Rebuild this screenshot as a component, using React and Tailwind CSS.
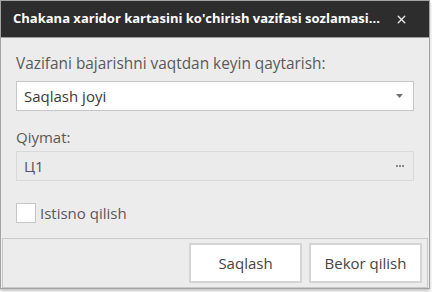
import React from 'react';
import { X } from 'lucide-react';

const font = { fontFamily: '"Open Sans", "Noto Sans", sans-serif' };

const Dots = () => (
  <span className="flex gap-[1px] items-center">
    <span className="w-[2px] h-[2px] bg-[#8a8a8a]" />
    <span className="w-[2px] h-[2px] bg-[#8a8a8a]" />
    <span className="w-[2px] h-[2px] bg-[#8a8a8a]" />
  </span>
);

const App = () => {
  return (
    <div className="w-[432px] h-[292px] bg-white" style={font}>
      <div className="w-[430px] h-[289px] flex flex-col bg-[#ececec] border border-[#a3a3a3] shadow-[0_2px_3px_rgba(0,0,0,0.25)]">
        <div className="h-[37px] shrink-0 bg-[#2d2d2d] border-b border-[#9c9c9c] flex items-center justify-between pl-[12px] pr-[21px]">
          <span className="text-white font-bold text-[13px] whitespace-nowrap">
            Chakana xaridor kartasini ko'chirish vazifasi sozlamasi...
          </span>
          <X size={13} strokeWidth={2.6} className="text-[#e6e6e6] shrink-0" />
        </div>

        <div className="flex-1 px-[15px] pt-[16px]">
          <div className="text-[15.4px] leading-[20px] text-[#595959]">
            Vazifani bajarishni vaqtdan keyin qaytarish:
          </div>
          <div className="mt-[7px] h-[30px] bg-white border border-[#c6c6c6] flex items-center justify-between pl-[7px] pr-[10px]">
            <span className="text-[15px] text-[#3a3a3a]">Saqlash joyi</span>
            <svg width="7" height="4" viewBox="0 0 7 4">
              <path d="M0 0 L7 0 L3.5 4 Z" fill="#707070" />
            </svg>
          </div>

          <div className="mt-[16px] text-[15px] leading-[20px] text-[#595959]">Qiymat:</div>
          <div className="mt-[4px] h-[30px] bg-[#ebebeb] border border-[#dadada] flex items-center justify-between pl-[7px] pr-[9px]">
            <span className="text-[15px] text-[#555]">Ц1</span>
            <Dots />
          </div>

          <label className="mt-[21px] flex items-center gap-[4px]">
            <span className="w-[20px] h-[20px] bg-white border border-[#c6c6c6]" />
            <span className="text-[15px] text-[#595959]">Istisno qilish</span>
          </label>
        </div>

        <div className="h-[50px] shrink-0 mx-[1px] border border-[#c9c9c9] flex items-center justify-end gap-[7px] pr-[5px]">
          <button className="w-[113px] h-[40px] bg-white border-2 border-[#d4d4d4] text-[15px] text-[#444]">
            Saqlash
          </button>
          <button className="w-[113px] h-[40px] bg-white border-2 border-[#d4d4d4] text-[15px] text-[#444]">
            Bekor qilish
          </button>
        </div>
      </div>
    </div>
  );
};

export default App;
